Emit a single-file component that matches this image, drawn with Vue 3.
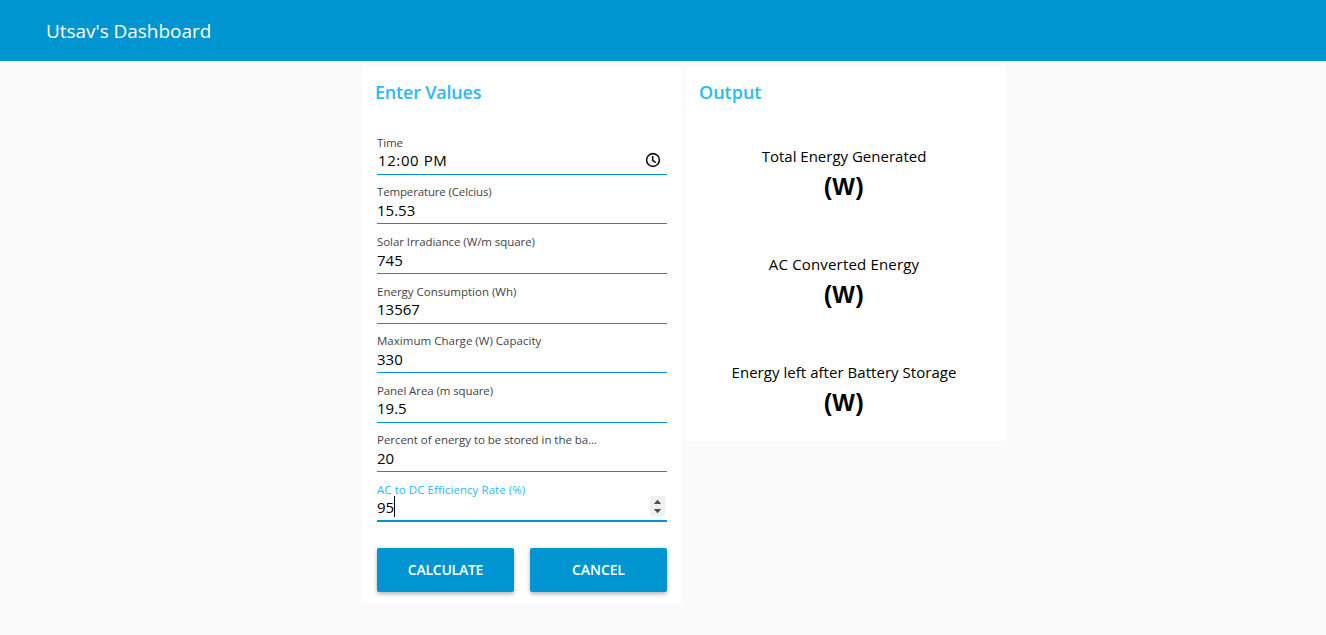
<script setup>
const fields = [
  { label: 'Time', value: '12:00 PM', kind: 'time', track: -0.1 },
  { label: 'Temperature (Celcius)', value: '15.53', track: -0.15 },
  { label: 'Solar Irradiance (W/m square)', value: '745', track: -0.07 },
  { label: 'Energy Consumption (Wh)', value: '13567', track: 0 },
  { label: 'Maximum Charge (W) Capacity', value: '330', track: 0.02 },
  { label: 'Panel Area (m square)', value: '19.5', track: -0.1 },
  { label: 'Percent of energy to be stored in the ba...', value: '20', track: -0.04 },
  { label: 'AC to DC Efficiency Rate (%)', value: '95', kind: 'focused', track: 0.06 }
]
const outputs = [
  { text: 'Total Energy Generated', track: 0 },
  { text: 'AC Converted Energy', track: 0.17 },
  { text: 'Energy left after Battery Storage', track: 0.04 }
]
</script>

<template>
  <div class="page">
    <header class="bar"><h1>Utsav's Dashboard</h1></header>
    <main class="cards">
      <section class="card form">
        <h2>Enter Values</h2>
        <div class="fields">
          <div v-for="f in fields" :key="f.label" class="field" :class="f.kind">
            <div class="label" :style="{ letterSpacing: f.track + 'px' }">{{ f.label }}</div>
            <div class="value">
              <span>{{ f.value }}</span><i v-if="f.kind === 'focused'" class="caret"></i>
              <svg v-if="f.kind === 'time'" class="clock" viewBox="0 0 16 16"><circle cx="8" cy="8" r="6.4" /><path d="M7.7 4v4.4l3 2.2" /></svg>
              <svg v-if="f.kind === 'focused'" class="spin" viewBox="0 0 15 20"><path d="M7.5 3.7L11.2 8H3.8zM7.5 17.3L11.2 13H3.8z" /></svg>
            </div>
          </div>
        </div>
        <div class="buttons">
          <button class="calc">CALCULATE</button>
          <button>CANCEL</button>
        </div>
      </section>
      <section class="card output">
        <h2>Output</h2>
        <div class="results">
          <div v-for="o in outputs" :key="o.text" class="result">
            <p :style="{ letterSpacing: o.track + 'px' }">{{ o.text }}</p>
            <strong>(W)</strong>
          </div>
        </div>
      </section>
    </main>
  </div>
</template>

<style>
body { margin: 0; background: #fafafa; }
</style>

<style scoped>
.page { min-height: 635px; background: #fafafa; font-family: "Open Sans", "Noto Sans", sans-serif; color: #000; }
.bar { height: 61px; box-sizing: border-box; padding-left: 46px; background: #0094d0; color: #fff; display: flex; align-items: center; }
h1 { margin: 0; font-size: 19px; font-weight: 400; line-height: 28px; letter-spacing: -0.04px; }
.cards { display: flex; align-items: flex-start; gap: 4px; padding: 6px 0 0 362px; }
.card { width: 320px; box-sizing: border-box; background: #fff; }
.form { height: 536px; padding: 0 15px; }
.output { height: 374px; }
h2 { margin: 0; padding-top: 13px; height: 45.2px; font-size: 18px; line-height: 25px; font-weight: 600; color: #29b9fc; }
.form h2 { margin-left: -2px; letter-spacing: -0.2px; }
.output h2 { padding-left: 13px; }
.field { height: 49.6px; box-sizing: border-box; border-bottom: 1px solid #0094d0; padding-top: 9.6px; }
.focused { border-bottom-width: 2px; }
.label { height: 16px; font-size: 11.5px; line-height: 16px; color: #444; white-space: nowrap; }
.focused .label { color: #29b9fc; }
.value { height: 20px; margin-top: -0.45px; display: flex; align-items: center; font-size: 15px; line-height: 20px; }
.time .value { margin-top: -1px; padding-left: 1px; letter-spacing: 0.6px; }
.focused .value { margin-top: -1px; }
.caret { width: 1px; height: 21px; margin-top: -1px; background: #000; }
.clock { width: 16px; height: 16px; margin: 0 6px 0 auto; fill: none; stroke: #111; stroke-width: 1.6; }
.spin { width: 15px; height: 20px; margin: -1px 2px 0 auto; background: #f0f0f0; fill: #505050; }
.buttons { display: flex; gap: 16px; margin-top: 26px; }
button { width: 137px; height: 44px; border: 0; padding: 0; border-radius: 2px; background: #0094d0; color: #fff; font: 600 14px/20px "Open Sans", sans-serif; letter-spacing: -0.1px; box-shadow: 0 2px 4px rgba(0, 0, 0, .3); }
.calc { letter-spacing: -0.25px; }
.results { padding: 20px 4px 0 0; text-align: center; }
.result { height: 108px; }
p { margin: 0; font-size: 15px; line-height: 22px; }
strong { display: block; margin-top: 5px; font: 700 24px/30px "Liberation Sans", Arial, sans-serif; letter-spacing: 0.6px; }
</style>
